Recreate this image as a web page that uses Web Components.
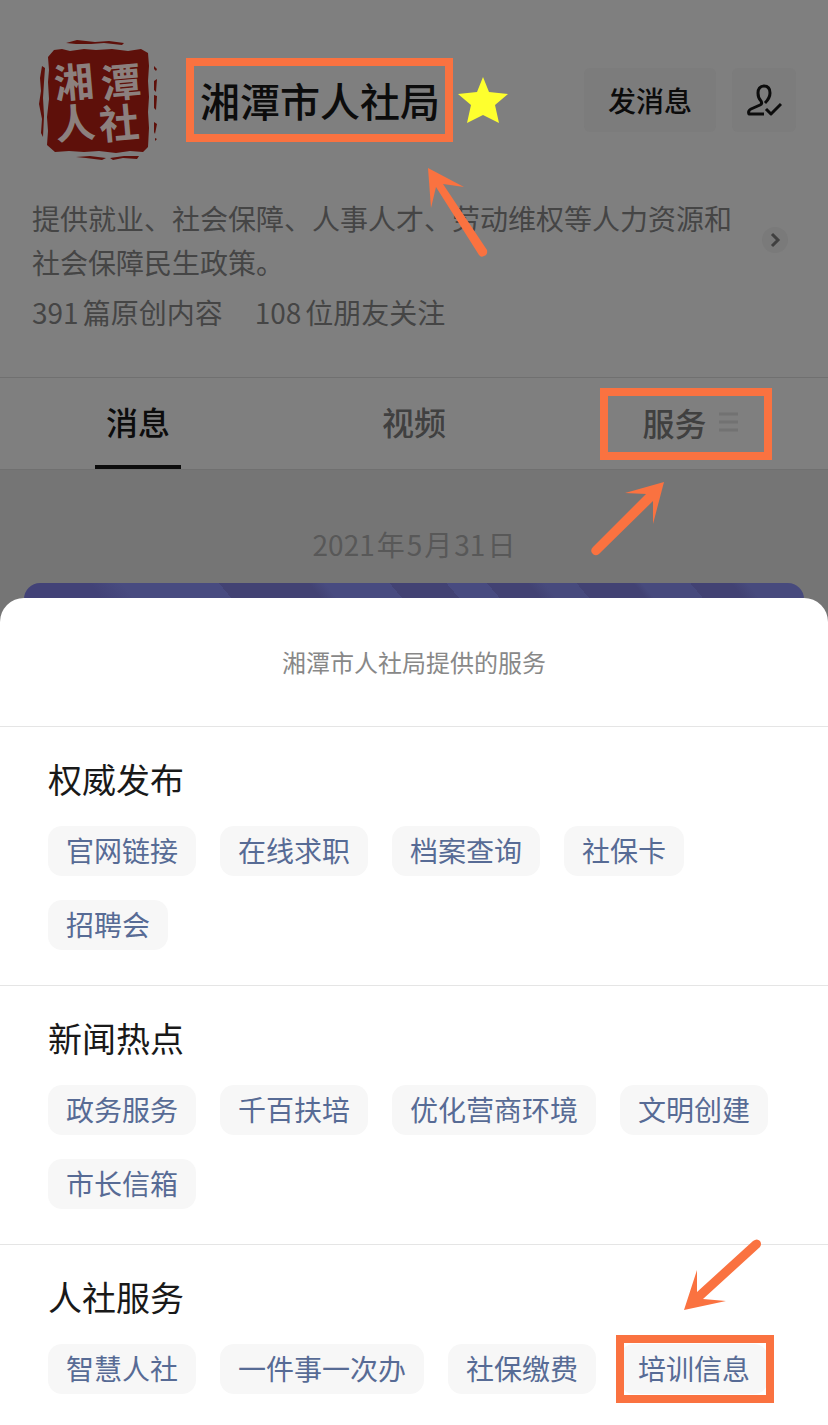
<!DOCTYPE html>
<html lang="zh-CN">
<head>
<meta charset="utf-8">
<meta name="viewport" content="width=device-width, initial-scale=1">
<title>湘潭市人社局</title>
<style>
	body {
		margin: 0;
		background: #fff;
		font-family: "Noto Sans CJK SC", "Liberation Sans", sans-serif;
		font-size: 28px;
	}
</style>
</head>
<body>
<account-page></account-page>

<script>
class BaseElement extends HTMLElement {
	constructor() {
		super();
		this.attachShadow({mode: 'open'});
		this.shadowRoot.innerHTML = this.template();
	}
}

// Orange frame over whatever is slotted, with an optional arrow
class MarkBox extends BaseElement {
	template() {
		return `
			<style>
				:host {
					display: block;
					position: relative;
				}
				.frame {
					position: absolute;
					inset: var(--mark-inset, -8px);
					box-sizing: border-box;
					border: 8px solid #fa7240;
					pointer-events: none;
				}
				::slotted(svg) {
					position: absolute;
					z-index: 2;
					fill: #fa7240;
					pointer-events: none;
				}
			</style>
			<slot></slot>
			<div class="frame"></div>
			<slot name="arrow"></slot>
		`;
	}
}

class AccountSeal extends BaseElement {
	template() {
		return `
			<style>
				:host { display: block; flex: none; }
				svg { display: block; }
				text { font-size: 40px; font-weight: 700; fill: #8c807e; }
			</style>
			<svg width="126" height="120" viewBox="32 40 126 120" role="img" aria-label="湘潭人社">
				<g fill="#5e100a">
					<path d="M54 50 L62 49 L70 51 L84 49 L96 50 L112 49 L128 51 L141 49 L148 53 L149 66 L148 81 L149 97 L148 112 L149 128 L148 147 L143 152 L130 151 L116 153 L99 151 L84 152 L69 151 L55 152 L47 145 L48 131 L47 117 L49 99 L48 82 L49 70 L48 57 Z"/>
					<path d="M66 43 L77 40 L95 42 L109 41 L124 43 L122 45 L104 43 L91 44 L76 44 Z"/>
					<path d="M42 66 L45 68 L44 82 L43 98 L44 116 L43 137 L41 133 L42 119 L39 104 L41 91 L40 78 Z"/>
					<path d="M154 66 L157 69 L156 71 L154 69 Z M154 81 L157 79 L156 92 L154 90 Z M154 95 L157 96 L156 110 L154 108 Z M154 122 L157 124 L155 134 L154 132 Z M155 138 L157 139 L155 141 Z"/>
					<path d="M76 157 L90 156 L106 158 L102 160 L86 158 Z M110 158 L124 156 L139 156 L137 159 L123 158 L113 160 Z"/>
				</g>
				<text x="54" y="97" transform="rotate(-5 75 84)">湘</text>
				<text x="101" y="97" transform="rotate(-5 121 84)">潭</text>
				<text x="55" y="138" transform="rotate(-5 75 122)">人</text>
				<text x="99" y="138" transform="rotate(-5 120 122)">社</text>
			</svg>
		`;
	}
}

class AccountHeader extends BaseElement {
	template() {
		return `
			<style>
				:host {
					display: block;
					padding: 40px 32px 42px;
					background: #7f7f7f;
					color: #454545;
				}
				.top {
					display: flex;
					align-items: center;
				}
				h1 {
					margin: 0;
					font-size: 40px;
					line-height: 48px;
					font-weight: 500;
					color: #0c0c0c;
				}
				mark-box {
					margin-left: 42px;
					margin-right: 18px;
					--mark-inset: -18px -13px -18px -14px;
				}
				.arrow {
					left: 226px;
					top: 91px;
				}
				.actions {
					display: flex;
					gap: 16px;
					margin-left: auto;
				}
				button {
					font: inherit;
					border: 0;
					margin: 0;
					padding: 0;
					background: none;
					color: inherit;
				}
				.actions button {
					display: flex;
					align-items: center;
					justify-content: center;
					height: 64px;
					min-width: 64px;
					border-radius: 6px;
					background: #7c7c7c;
					color: #0c0c0c;
					font-weight: 500;
				}
				.actions .message {
					padding: 0 24px;
				}
				.about {
					display: flex;
					align-items: center;
					gap: 16px;
					width: 100%;
					margin-top: 36px;
					text-align: left;
					line-height: 44px;
				}
				.about span { flex: 1; }
				.about svg { flex: none; margin-right: 8px; }
				.stats {
					display: flex;
					gap: 32px;
					margin: 6px 0 0;
					padding-bottom: 1px;
					line-height: 44px;
				}
				.stats b {
					font-weight: 400;
					margin-right: 4px;
				}
			</style>
			<div class="top">
				<account-seal></account-seal>
				<mark-box>
					<h1>湘潭市人社局</h1>
					<svg slot="arrow" class="arrow" width="62" height="92" viewBox="426 167 62 92" aria-hidden="true">
						<path d="M428 168 L464 187 L443 184 L487 250 Q488 255 484 256 Q481 258 479 255 L436 187 L431 208 Z"/>
					</svg>
				</mark-box>
				<svg width="50" height="46" viewBox="458 76 50 46" aria-hidden="true">
					<path fill="#feff2e" d="M483 76 L489 91 L508 93 L495 104 L499 122 L483 114 L467 122 L471 104 L458 93 L477 91 Z"/>
				</svg>
				<div class="actions">
					<button class="message">发消息</button>
					<button aria-label="已关注">
						<svg width="36" height="32" viewBox="0 0 36 32" fill="none" stroke="currentColor" stroke-width="3" stroke-linejoin="round">
							<path d="M19 19 C22 16 24 13 24 9 C24 4 22 2 18 2 C14 2 12 5 12 9 C12 13 13 15 15 17 C16 19 16 20 14 21 L5 25 C3 26 2 28 3 30 L18 30"/>
							<path d="M20 25 L25 30 L35 20"/>
						</svg>
					</button>
				</div>
			</div>
			<button class="about">
				<span>提供就业、社会保障、人事人才、劳动维权等人力资源和社会保障民生政策。</span>
				<svg width="26" height="26" viewBox="0 0 26 26" fill="none" aria-hidden="true">
					<circle cx="13" cy="13" r="13" fill="#7a7a7a"/>
					<path d="M10 7 L16 13 L10 19" stroke="#404040" stroke-width="3"/>
				</svg>
			</button>
			<p class="stats">
				<span><b>391</b>篇原创内容</span>
				<span><b>108</b>位朋友关注</span>
			</p>
		`;
	}
}

class AccountTabs extends BaseElement {
	template() {
		return `
			<style>
				:host {
					display: block;
					border-top: 1px solid #707070;
					border-bottom: 1px solid #707070;
					background: #7f7f7f;
				}
				nav {
					display: grid;
					grid-template-columns: repeat(3, 1fr);
				}
				button {
					display: flex;
					align-items: center;
					justify-content: center;
					height: 91px;
					padding: 0;
					border: 0;
					background: none;
					font: inherit;
					font-size: 32px;
					line-height: 44px;
					font-weight: 500;
					color: #404040;
				}
				.label {
					box-sizing: border-box;
					height: 91px;
					padding: 21px 11px 0;
					border-bottom: 4px solid transparent;
				}
				.current {
					color: #0c0c0c;
				}
				.current .label {
					border-color: #0c0c0c;
				}
				mark-box {
					--mark-inset: -12px -34px -12px -42px;
				}
				.menu {
					display: flex;
					align-items: center;
					gap: 12px;
					padding-bottom: 4px;
				}
				.arrow {
					left: -52px;
					top: 80px;
				}
			</style>
			<nav>
				<button class="current" aria-current="true"><span class="label">消息</span></button>
				<button><span class="label">视频</span></button>
				<button>
					<mark-box>
						<span class="menu">服务
							<svg width="19" height="20" viewBox="0 0 19 20" aria-hidden="true">
								<path d="M0 2H19M0 10H19M0 18H19" stroke="#727272" stroke-width="3"/>
							</svg>
						</span>
						<svg slot="arrow" class="arrow" width="76" height="78" viewBox="589 481 76 78" aria-hidden="true">
							<path d="M663 483 L652 525 L652 502 L598 555 Q594 558 591 554 Q589 551 592 548 L645 495 L624 494 Z"/>
						</svg>
					</mark-box>
				</button>
			</nav>
		`;
	}
}

class MessageFeed extends BaseElement {
	template() {
		return `
			<style>
				:host {
					display: block;
					padding: 52px 24px 0;
					background: #757575;
					color: #585858;
				}
				time {
					display: flex;
					justify-content: center;
					gap: 2px;
					line-height: 44px;
				}
				.card {
					height: 39px;
					margin-top: 17px;
					border-radius: 16px 16px 0 0;
					background: linear-gradient(50deg,
						#424277 0 12%, #484b80 16% 28%, #424273 28% 39%, #484b80 41% 49%,
						#424273 49% 56%, #484b80 56% 61%, #424273 61% 66%, #474a7d 68% 72%,
						#424273 72% 79%, #474a7d 80% 86%, #424273 86% 91%, #474a7d 93%);
				}
			</style>
			<time datetime="2021-05-31"><span>2021</span><span>年</span><span>5</span><span>月</span><span>31</span><span>日</span></time>
			<div class="card"></div>
		`;
	}
}

class ServiceChip extends BaseElement {
	template() {
		return `
			<style>
				:host { display: block; }
				button {
					display: block;
					height: 50px;
					padding: 0 18px 2px;
					border: 0;
					border-radius: 14px;
					background: #f7f7f7;
					color: #576b95;
					font: inherit;
					line-height: 48px;
				}
			</style>
			<button><slot></slot></button>
		`;
	}
}

class ServiceGroup extends BaseElement {
	template() {
		return `
			<style>
				:host {
					display: block;
					padding: 30px 48px 35px;
					border-top: 1px solid #e5e5e5;
				}
				h2 {
					margin: 0 0 25px;
					font-size: 34px;
					line-height: 44px;
					font-weight: 400;
					color: #191919;
				}
				.chips {
					display: flex;
					flex-wrap: wrap;
					gap: 24px;
				}
			</style>
			<h2></h2>
			<div class="chips"><slot></slot></div>
		`;
	}

	connectedCallback() {
		this.shadowRoot.querySelector("h2").textContent = this.getAttribute("heading");
	}
}

class ServiceSheet extends BaseElement {
	template() {
		return `
			<style>
				:host {
					display: block;
					position: relative;
					border-radius: 24px 24px 0 0;
					background: #fff;
				}
				p {
					margin: 0;
					padding: 44px 24px;
					text-align: center;
					font-size: 24px;
					line-height: 40px;
					color: #888;
				}
			</style>
			<p>湘潭市人社局提供的服务</p>
			<slot></slot>
		`;
	}
}

class AccountPage extends BaseElement {
	template() {
		return `
			<style>
				:host {
					display: block;
					background: #757575;
				}
				service-sheet {
					margin-top: -24px;
				}
				mark-box {
					--mark-inset: -9px -6px -9px -4px;
				}
				.arrow {
					left: 62px;
					top: -106px;
				}
				.last {
					padding-bottom: 31px;
				}
			</style>
			<account-header></account-header>
			<account-tabs></account-tabs>
			<message-feed></message-feed>
			<service-sheet>
				<service-group heading="权威发布">
					<service-chip>官网链接</service-chip>
					<service-chip>在线求职</service-chip>
					<service-chip>档案查询</service-chip>
					<service-chip>社保卡</service-chip>
					<service-chip>招聘会</service-chip>
				</service-group>
				<service-group heading="新闻热点">
					<service-chip>政务服务</service-chip>
					<service-chip>千百扶培</service-chip>
					<service-chip>优化营商环境</service-chip>
					<service-chip>文明创建</service-chip>
					<service-chip>市长信箱</service-chip>
				</service-group>
				<service-group heading="人社服务" class="last">
					<service-chip>智慧人社</service-chip>
					<service-chip>一件事一次办</service-chip>
					<service-chip>社保缴费</service-chip>
					<mark-box>
						<service-chip>培训信息</service-chip>
						<svg slot="arrow" class="arrow" width="80" height="74" viewBox="682 1237 80 74" aria-hidden="true">
							<path d="M684 1309 L697 1269 L697 1291 L753 1240 Q757 1237 760 1240 Q762 1243 760 1246 L703 1298 L726 1300 Z"/>
						</svg>
					</mark-box>
				</service-group>
			</service-sheet>
		`;
	}
}

window.customElements.define('mark-box', MarkBox);
window.customElements.define('account-seal', AccountSeal);
window.customElements.define('account-header', AccountHeader);
window.customElements.define('account-tabs', AccountTabs);
window.customElements.define('message-feed', MessageFeed);
window.customElements.define('service-chip', ServiceChip);
window.customElements.define('service-group', ServiceGroup);
window.customElements.define('service-sheet', ServiceSheet);
window.customElements.define('account-page', AccountPage);
</script>
</body>
</html>
